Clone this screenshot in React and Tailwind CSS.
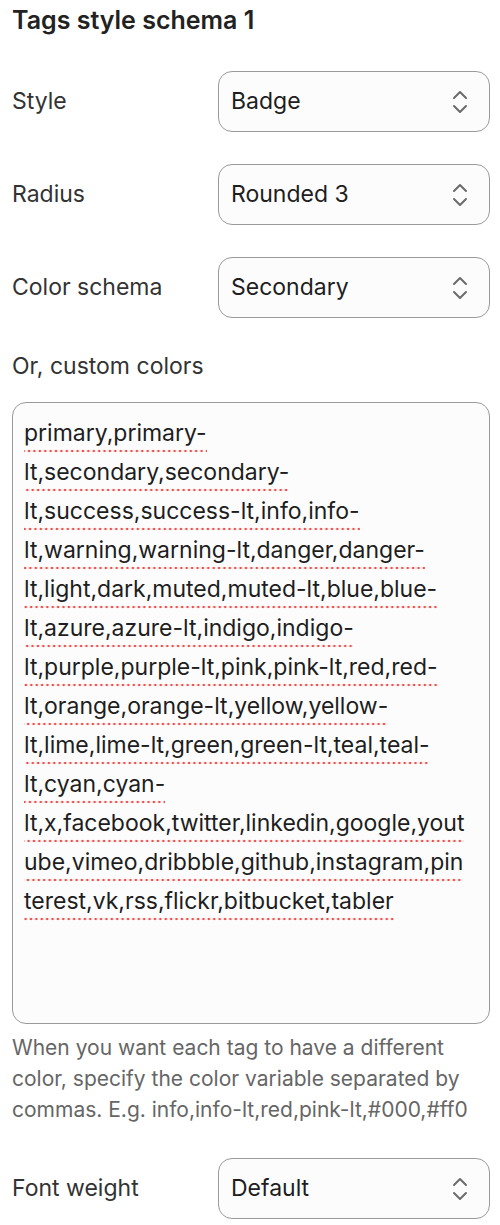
import React from "react";

const Chevrons = () => (
  <svg width="16" height="26" viewBox="0 0 16 26" fill="none" stroke="#6b6b6b" strokeWidth="2" strokeLinecap="round" strokeLinejoin="round">
    <path d="M2 9 L8 3 L14 9" />
    <path d="M2 17 L8 23 L14 17" />
  </svg>
);

const SelectRow = ({ label, value }) => (
  <div className="flex items-center h-[61px]">
    <div className="w-[206px] text-[23px] text-[#333]">{label}</div>
    <div className="flex-1 h-[61px] rounded-[14px] border border-[#9a9a9a] bg-[#fcfcfc] flex items-center justify-between pl-[12px] pr-[21px]">
      <span className="text-[23px] text-[#1e1e1e]">{value}</span>
      <Chevrons />
    </div>
  </div>
);

const lines = [
  "primary,primary-",
  "lt,secondary,secondary-",
  "lt,success,success-lt,info,info-",
  "lt,warning,warning-lt,danger,danger-",
  "lt,light,dark,muted,muted-lt,blue,blue-",
  "lt,azure,azure-lt,indigo,indigo-",
  "lt,purple,purple-lt,pink,pink-lt,red,red-",
  "lt,orange,orange-lt,yellow,yellow-",
  "lt,lime,lime-lt,green,green-lt,teal,teal-",
  "lt,cyan,cyan-",
  "lt,x,facebook,twitter,linkedin,google,yout",
  "ube,vimeo,dribbble,github,instagram,pin",
  "terest,vk,rss,flickr,bitbucket,tabler",
];

export default function App() {
  return (
    <div className="w-[500px] h-[1225px] bg-white pl-[12px] pr-[10px] overflow-hidden" style={{ fontFamily: "Inter, 'Noto Sans', sans-serif" }}>
      <h1 className="text-[25px] font-semibold text-[#222] pt-[5px] leading-[30px]">Tags style schema 1</h1>
      <div className="mt-[36px] flex flex-col gap-[32px]">
        <SelectRow label="Style" value="Badge" />
        <SelectRow label="Radius" value="Rounded 3" />
        <SelectRow label="Color schema" value="Secondary" />
      </div>
      <div className="mt-[33px] text-[23px] text-[#333] leading-[30px]">Or, custom colors</div>
      <div className="mt-[21px] h-[622px] rounded-[14px] border border-[#9a9a9a] bg-[#fcfcfc] pl-[11px] pt-[11px]">
        {lines.map((l, i) => (
          <div key={i} className="text-[23px] leading-[39px] h-[39px] text-[#1e1e1e] whitespace-nowrap">
            <span className="inline-block leading-[28px] pb-[6px] bg-[radial-gradient(circle,#ef5350_1.1px,transparent_1.6px)] bg-[length:5.4px_4px] bg-repeat-x bg-bottom">{l}</span>
          </div>
        ))}
      </div>
      <p className="mt-[8px] text-[21px] leading-[31px] text-[#666] pr-[10px]">
        When you want each tag to have a different color, specify the color variable separated by commas. E.g. info,info-lt,red,pink-lt,#000,#ff0
      </p>
      <div className="mt-[33px]">
        <SelectRow label="Font weight" value="Default" />
      </div>
    </div>
  );
}
